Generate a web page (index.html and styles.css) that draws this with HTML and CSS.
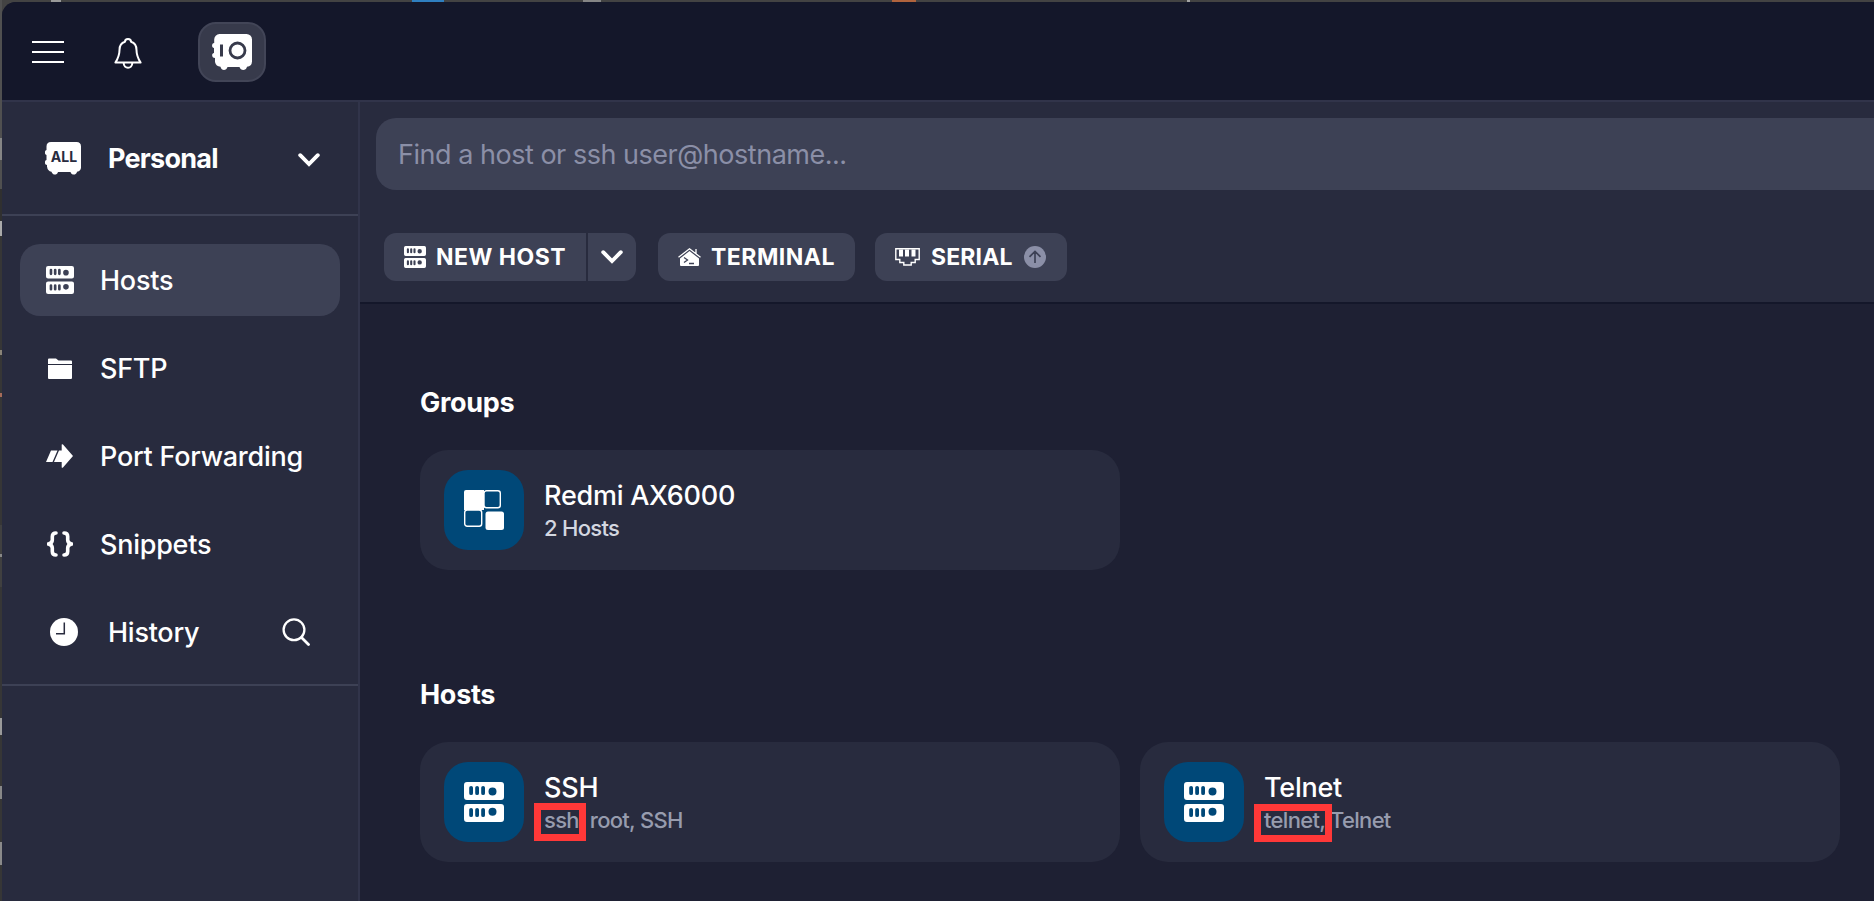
FILE: index.html
```html
<!DOCTYPE html>
<html lang="en">
<head>
<meta charset="utf-8">
<title>Hosts</title>
<link rel="stylesheet" href="styles.css">
</head>
<body>
<svg class="defs" width="0" height="0">
  <symbol id="server" viewBox="0 0 40 40">
    <path fill-rule="evenodd" d="M3 0H37A3 3 0 0 1 40 3V15A3 3 0 0 1 37 18H3A3 3 0 0 1 0 15V3A3 3 0 0 1 3 0ZM5.200 5.800V11.200A1.900 1.900 0 0 0 9 11.200V5.800A1.900 1.900 0 0 0 5.200 5.800ZM11.200 5.800V11.200A1.900 1.900 0 0 0 15 11.200V5.800A1.900 1.900 0 0 0 11.200 5.800ZM17.200 5.800V11.200A1.900 1.900 0 0 0 21 11.200V5.800A1.900 1.900 0 0 0 17.200 5.800ZM24.500 9.500A4 4 0 0 0 32.500 9.500A4 4 0 0 0 24.500 9.500Z"/>
    <path fill-rule="evenodd" transform="translate(0 22)" d="M3 0H37A3 3 0 0 1 40 3V15A3 3 0 0 1 37 18H3A3 3 0 0 1 0 15V3A3 3 0 0 1 3 0ZM5.200 5.800V11.200A1.900 1.900 0 0 0 9 11.200V5.800A1.900 1.900 0 0 0 5.200 5.800ZM11.200 5.800V11.200A1.900 1.900 0 0 0 15 11.200V5.800A1.900 1.900 0 0 0 11.200 5.800ZM17.200 5.800V11.200A1.900 1.900 0 0 0 21 11.200V5.800A1.900 1.900 0 0 0 17.200 5.800ZM24.500 7.800A4 4 0 0 0 32.500 7.800A4 4 0 0 0 24.500 7.800Z"/>
  </symbol>
  <symbol id="chevron" viewBox="0 0 22 14">
    <path d="M2.200 2.200L11 11L19.800 2.200" fill="none" stroke="currentColor" stroke-width="3.800" stroke-linecap="round" stroke-linejoin="miter"/>
  </symbol>
</svg>
<div class="window">
  <header class="titlebar">
    <svg class="i-menu" width="32" height="22" viewBox="0 0 32 22"><path d="M0 1H32M0 11H32M0 21H32" stroke="#fff" stroke-width="2"/></svg>
    <svg class="i-bell" width="28" height="31" viewBox="0 0 28 31" fill="none" stroke="#fff" stroke-width="2" stroke-linejoin="round"><path d="M11 3.800C11 2 12.200 1.100 14 1.100S17 2 17 3.800C20.800 5 22.500 8 22.500 12C22.500 18 24 20.500 26.600 24.600H1.400C4 20.500 5.500 18 5.500 12C5.500 8 7.200 5 11 3.800Z"/><path d="M9.700 25C9.700 31.400 18.300 31.400 18.300 25"/></svg>
    <div class="vault">
      <svg width="40" height="36" viewBox="0 0 40 36"><path fill="#fff" fill-rule="evenodd" d="M7.500 0H34.500A5.500 5.500 0 0 1 40 5.500V27.500A5.500 5.500 0 0 1 35 32.700C34 37.200 28.500 36.800 27.500 33H15.500C14.500 36.800 9.500 37.200 8.500 32.700Q4 32.500 3 28V24C-.600 24 -.600 19 2 19V14C-.600 14 -.600 9 2.200 9V5.500A5.500 5.500 0 0 1 7.500 0ZM8 10.500V22.500H11V10.500Z"/><circle cx="25.500" cy="16.500" r="7.500" fill="none" stroke="#373a4b" stroke-width="2.800"/></svg>
    </div>
  </header>
  <div class="body">
    <aside class="sidebar">
      <div class="account">
        <div class="all"><svg width="36" height="33" viewBox="0 0 36 33"><path fill="#fff" d="M6 0H31.500Q36 0 36 4.500V25.500Q36 29 32 29.800C31.500 33.500 26.500 33.500 25.500 30H13C12 33.500 7.500 33.500 6.500 29.800Q2.500 29 2 24.500V23C-.700 23 -.700 18.500 1.500 18V13C-.700 12.500 -.700 8.500 1.500 8V4.500Q1.500 0 6 0Z"/></svg><span class="all-text">ALL</span></div>
        <b class="t-personal">Personal</b>
        <svg class="i-chev" width="22" height="14"><use href="#chevron"/></svg>
      </div>
      <nav class="nav">
        <a class="item active"><span class="ico"><svg width="28" height="28" fill="#fff"><use href="#server"/></svg></span><span class="t-hosts">Hosts</span></a>
        <a class="item"><span class="ico"><svg width="24" height="21" viewBox="0 0 24 21" fill="#fff"><path d="M0 6V1.500Q0 .500 1 .500H8L10.500 2.500H23Q24 2.500 24 3.500V6ZM0 7H24V19.800Q24 21 23 21H1Q0 21 0 20Z"/></svg></span><span class="t-sftp">SFTP</span></a>
        <a class="item"><span class="ico"><svg width="28" height="24" viewBox="0 0 28 24" fill="#fff"><path d="M5 6.500H11.500L6.500 18H0ZM13 6.500H15.700V.500Q16.300 -.200 17 .500L27 12L17 23.500Q16.300 24.200 15.700 23.500V18H8Z"/></svg></span><span class="t-port">Port Forwarding</span></a>
        <a class="item"><span class="ico"><svg width="26" height="26" viewBox="0 0 26 26" fill="none" stroke="#fff" stroke-width="3.600" stroke-linecap="round"><path d="M9 2Q5.300 2 5.300 5.500V9Q5.300 12 1.500 13Q5.300 14 5.300 17V20.500Q5.300 24 9 24M17 2Q20.700 2 20.700 5.500V9Q20.700 12 24.500 13Q20.700 14 20.700 17V20.500Q20.700 24 17 24"/></svg></span><span class="t-snip">Snippets</span></a>
        <a class="item history"><span class="ico"><svg width="28" height="28" viewBox="0 0 28 28"><circle cx="14" cy="14" r="14" fill="#fff"/><path d="M14.300 4.500V15.700H6" fill="none" stroke="#282b3e" stroke-width="1.500"/></svg></span><span class="t-hist">History</span><svg class="i-search" width="28" height="28" viewBox="0 0 28 28" fill="none" stroke="#fff" stroke-width="2.300" stroke-linecap="round"><circle cx="12" cy="11.800" r="10.400"/><path d="M19.500 19.500L26.500 26.500" stroke-width="2.800"/></svg></a>
      </nav>
    </aside>
    <main class="main">
      <div class="tools">
        <div class="search"><span class="t-find">Find a host or ssh user@hostname...</span></div>
        <div class="buttons">
          <div class="split">
            <button class="btn newhost"><svg width="22" height="22" fill="#fff"><use href="#server"/></svg><span class="t-new">NEW HOST</span></button>
            <button class="btn more"><svg width="22" height="14"><use href="#chevron"/></svg></button>
          </div>
          <button class="btn terminal"><svg width="23" height="18" viewBox="0 0 23 18"><path d="M11.500 3L21 10.500V17Q21 18 20 18H3Q2 18 2 17V10.500Z" fill="#fff"/><path d="M.500 9.300L11.500 .800L22.500 9.300M18 5.500V1" fill="none" stroke="#fff" stroke-width="1.300"/><path d="M6 9.500L9.500 12L6 14.500M11 15.500H16" fill="none" stroke="#3d4155" stroke-width="1.300"/></svg><span class="t-term">TERMINAL</span></button>
          <button class="btn serial"><svg width="25" height="18" viewBox="0 0 25 18"><path d="M.800 .800H24.200V11.500H20.200V14.500H16.200V17H8.800V14.500H4.800V11.500H.800Z" fill="none" stroke="#fff" stroke-width="1.400"/><path d="M4 1.500H8V8.500H4ZM10 1.500H14V8.500H10ZM16.500 1.500H20.500V8.500H16.500Z" fill="#fff"/></svg><span class="t-serial">SERIAL</span><svg class="i-up" width="22" height="22" viewBox="0 0 22 22"><circle cx="11" cy="11" r="11" fill="#8b8fa7"/><path d="M11 17V5.500M5.500 10.800L11 5.500L16.500 10.800" fill="none" stroke="#3d4155" stroke-width="1.700"/></svg></button>
        </div>
      </div>
      <section class="section groups">
        <h2><span class="t-groups">Groups</span></h2>
        <div class="cards">
          <article class="card"><div class="tile"><svg width="40" height="40" viewBox="0 0 40 40"><path d="M2 0H20V20H0V2Q0 0 2 0Z" fill="#fff"/><rect x="20" y=".700" width="16.300" height="17" rx="2.500" fill="none" stroke="#fff" stroke-width="1.400"/><rect x=".700" y="20" width="17" height="16.300" rx="2.500" fill="none" stroke="#fff" stroke-width="1.400"/><rect x="21.500" y="21.500" width="18.500" height="18.500" rx="2.500" fill="#fff"/></svg></div><div class="info"><div class="name"><span class="t-redmi">Redmi AX6000</span></div><div class="sub light"><span class="t-two">2 Hosts</span></div></div></article>
        </div>
      </section>
      <section class="section">
        <h2><span class="t-h2">Hosts</span></h2>
        <div class="cards">
          <article class="card"><div class="tile"><svg width="40" height="40" fill="#fff"><use href="#server"/></svg></div><div class="info"><div class="name"><span class="t-ssh">SSH</span></div><div class="sub"><span class="t-sshsub">ssh, root, SSH</span></div><i class="mark mark-ssh"></i></div></article>
          <article class="card"><div class="tile"><svg width="40" height="40" fill="#fff"><use href="#server"/></svg></div><div class="info"><div class="name"><span class="t-tel">Telnet</span></div><div class="sub"><span class="t-telsub">telnet, Telnet</span></div><i class="mark mark-telnet"></i></div></article>
        </div>
      </section>
    </main>
  </div>
</div>
</body>
</html>
```
FILE: styles.css
```css
* { box-sizing: border-box; }
html, body { margin: 0; height: 100%; overflow: hidden; }
body {
  font-family: Inter, "Liberation Sans", sans-serif;
  color: #fff;
  padding: 2px 0 0 2px;
  /* edges of the desktop behind the window: top strip, then left strip */
  background:
    linear-gradient(90deg, transparent 51px, #999 51px 61px, transparent 61px 412px, #2f7fc0 412px 444px, transparent 444px 583px, #858585 583px 601px, transparent 601px 892px, #b0633d 892px 916px, transparent 916px 1187px, #a5a5a5 1187px 1190px, transparent 1190px) 0 0 / 100% 2px no-repeat,
    linear-gradient(#505050 138px, #858585 138px 160px, #505050 160px 189px, #303030 189px 221px, #aaa 221px 236px, #363636 236px 350px, #8a8478 350px 355px, #363636 355px 393px, #a56c5a 393px 397px, #363636 397px 525px, #404040 525px 554px, #888 554px 557px, #404040 557px 587px, #363636 587px 718px, #9a9a9a 718px 735px, #363636 735px 786px, #888 786px 799px, #363636 799px 842px, #8a8a8a 842px 865px, #363636 865px) 0 0 / 2px 100% no-repeat,
    #434343;
}
.defs { position: absolute; }
svg { display: block; flex: none; }
.window { width: 1872px; height: 899px; border-top-left-radius: 14px; overflow: hidden; background: #1e2033; display: flex; flex-direction: column; }
.titlebar { height: 100px; flex: none; background: #14172a; border-bottom: 2px solid #31344a; display: flex; align-items: center; padding-left: 30px; }
.i-menu { margin-top: 2px; }
.i-bell { margin: 4px 0 0 50px; }
.vault { width: 68px; height: 60px; margin: 2px 0 0 56px; border-radius: 18px; background: #373a4b; border: 2px solid #424557; display: flex; align-items: center; justify-content: center; }
.body { flex: 1; display: flex; min-height: 0; }
.sidebar { width: 358px; flex: none; background: #282b3e; border-right: 2px solid #31344a; }
.account { height: 114px; border-bottom: 2px solid #3d4155; display: flex; align-items: center; padding: 0 38px 0 43px; }
.all { position: relative; width: 37px; height: 33px; }
.all-text { position: absolute; left: 2px; top: 7px; width: 34px; text-align: center; font-size: 14px; line-height: 16px; font-weight: 700; color: #282b3e; }
.t-personal { font-size: 27px; margin-left: 26px; letter-spacing: -.75px; }
.i-chev { margin-left: auto; margin-top: 3px; }
.nav { height: 470px; padding: 28px 18px 0; display: flex; flex-direction: column; gap: 16px; border-bottom: 2px solid #3d4155; }
.item { height: 72px; flex: none; border-radius: 20px; display: flex; align-items: center; padding-left: 24px; font-size: 27px; font-weight: 450; letter-spacing: -.25px; }
.item.active { background: #3d4155; }
.ico { width: 32px; margin-right: 24px; display: flex; justify-content: center; }
.history { padding-left: 28px; padding-right: 30px; }
.history .ico { margin-right: 28px; }
.i-search { margin-left: auto; }
.main { flex: 1; min-width: 0; }
.tools { height: 202px; background: #282b3e; border-bottom: 2px solid #14172a; padding: 16px 0 0 16px; }
.search { height: 72px; background: #3d4155; border-radius: 20px 0 0 20px; display: flex; align-items: center; padding-left: 22px; font-size: 27px; color: #8b8fa7; letter-spacing: -.48px; }
.buttons { display: flex; margin: 43px 0 0 8px; }
.split { display: flex; gap: 2px; margin-right: 22px; }
.btn { height: 48px; border: 0; margin: 0; padding: 0 0 0 20px; border-radius: 12px; background: #3d4155; color: #fff; font: 700 23px/48px Inter, sans-serif; display: flex; align-items: center; white-space: nowrap; }
.newhost { width: 202px; border-radius: 12px 0 0 12px; gap: 10px; letter-spacing: .5px; }
.more { width: 48px; border-radius: 0 12px 12px 0; padding: 0; justify-content: center; }
.terminal { width: 197px; gap: 10px; margin-right: 20px; letter-spacing: .5px; }
.serial { width: 192px; gap: 11px; letter-spacing: .15px; }
.section { padding: 79px 0 0 60px; height: 292px; }
h2 { margin: 0; font-size: 27px; line-height: 40px; height: 40px; font-weight: 700; letter-spacing: -.3px; }
.cards { display: flex; gap: 20px; margin-top: 27px; }
.card { width: 700px; height: 120px; border-radius: 28px; background: #282b3e; padding: 20px 24px; display: flex; gap: 20px; }
.tile { width: 80px; height: 80px; flex: none; border-radius: 24px; background: #004878; display: flex; align-items: center; justify-content: center; }
.info { position: relative; padding-top: 8px; }
.name { font-size: 27px; line-height: 36px; font-weight: 450; letter-spacing: -.25px; }
.sub { font-size: 22px; line-height: 28px; font-weight: 450; letter-spacing: -.7px; color: #979cae; }
.sub.light { color: #d3d7e0; }
.mark { position: absolute; left: -10px; height: 38px; border: 7px solid #ff3838; }
.mark-ssh { top: 41px; width: 52px; }
.mark-telnet { top: 42px; width: 78px; }
```
